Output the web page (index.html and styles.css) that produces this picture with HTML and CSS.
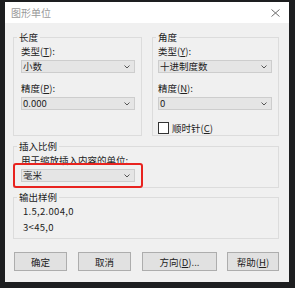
FILE: index.html
```html
<!DOCTYPE html>
<html lang="zh-CN">
<head>
    <meta charset="UTF-8">
    <title>图形单位</title>
    <link rel="stylesheet" href="styles.css">
</head>
<body>

<div class="dialog">
    <!-- 标题栏 -->
    <div class="titlebar">
        <span class="title">图形单位</span>
        <svg class="close" width="9" height="8" viewBox="0 0 9 8">
            <path d="M0.5 0.5 L8.5 7.5 M8.5 0.5 L0.5 7.5" stroke="#6e6e6e" stroke-width="1" fill="none"/>
        </svg>
    </div>

    <div class="content">
        <div class="top-groups">
            <!-- 长度 -->
            <fieldset class="group group-length">
                <legend>长度</legend>
                <div class="group-body">
                    <div class="label">类型(<u>T</u>):</div>
                    <div class="combo"><span>小数</span><svg class="arrow" width="6" height="4" viewBox="0 0 6 4"><path d="M0.5 0.5 L3 3 L5.5 0.5" stroke="#555" fill="none"/></svg></div>
                    <div class="label label-gap">精度(<u>P</u>):</div>
                    <div class="combo"><span>0.000</span><svg class="arrow" width="6" height="4" viewBox="0 0 6 4"><path d="M0.5 0.5 L3 3 L5.5 0.5" stroke="#555" fill="none"/></svg></div>
                </div>
            </fieldset>

            <!-- 角度 -->
            <fieldset class="group group-angle">
                <legend>角度</legend>
                <div class="group-body">
                    <div class="label">类型(<u>Y</u>):</div>
                    <div class="combo"><span>十进制度数</span><svg class="arrow" width="6" height="4" viewBox="0 0 6 4"><path d="M0.5 0.5 L3 3 L5.5 0.5" stroke="#555" fill="none"/></svg></div>
                    <div class="label label-gap">精度(<u>N</u>):</div>
                    <div class="combo"><span>0</span><svg class="arrow" width="6" height="4" viewBox="0 0 6 4"><path d="M0.5 0.5 L3 3 L5.5 0.5" stroke="#555" fill="none"/></svg></div>
                    <div class="check-row">
                        <span class="checkbox"></span>
                        <span>顺时针(<u>C</u>)</span>
                    </div>
                </div>
            </fieldset>
        </div>

        <!-- 插入比例 -->
        <fieldset class="group group-insert">
            <legend>插入比例</legend>
            <div class="group-body">
                <div class="label hint">用于缩放插入内容的单位:</div>
                <div class="combo combo-marked"><span>毫米</span><svg class="arrow" width="6" height="4" viewBox="0 0 6 4"><path d="M0.5 0.5 L3 3 L5.5 0.5" stroke="#555" fill="none"/></svg></div>
            </div>
        </fieldset>

        <!-- 输出样例 -->
        <fieldset class="group group-output">
            <legend>输出样例</legend>
            <div class="group-body">
                <div class="sample">1.5,2.004,0</div>
                <div class="sample sample-gap">3&lt;45,0</div>
            </div>
        </fieldset>

        <div class="buttons">
            <button class="btn btn-ok">确定</button>
            <button class="btn btn-cancel">取消</button>
            <button class="btn btn-dir">方向(<u>D</u>)...</button>
            <button class="btn btn-help">帮助(<u>H</u>)</button>
        </div>
    </div>
</div>

</body>
</html>
```

FILE: styles.css
```css
body {
    margin: 0;
    padding: 0;
    width: 295px;
    height: 288px;
    overflow: hidden;
    background: #1d1e20;
    font-family: "Noto Sans CJK SC", sans-serif;
    font-size: 9.5px;
    color: #222;
}
.dialog {
    margin: 2px 0 0 5px;
    width: 284px;
    height: 280px;
    background: #f0f0f0;
    display: flex;
    flex-direction: column;
}
.titlebar {
    height: 21px;
    background: #fff;
    display: flex;
    align-items: center;
    justify-content: space-between;
    padding: 0 9px 0 6px;
}
.title {
    font-size: 10px;
    color: #9a9a9a;
    line-height: 12px;
}
.content {
    padding: 8px 10px 0 8px;
}
.top-groups {
    display: flex;
    gap: 10px;
}
.group {
    margin: 0;
    padding: 0;
    border: 1px solid #dcdcdc;
    min-width: 0;
}
.group legend {
    margin-left: 3px;
    padding: 0 2px;
    line-height: 12px;
}
.group-length {
    flex: 0 0 127px;
}
.group-angle {
    flex: 1;
}
.group-length .group-body {
    padding: 2px 0 0 7px;
}
.group-angle .group-body {
    padding: 2px 0 1px 5px;
}
.label {
    line-height: 12px;
}
.label-gap {
    margin-top: 9px;
}
.combo {
    margin-top: 3px;
    width: 114px;
    height: 13px;
    box-sizing: border-box;
    background: #e5e5e5;
    border: 1px solid #cdcdcd;
    display: flex;
    align-items: center;
    justify-content: space-between;
    padding: 0 4px 0 1px;
    line-height: 11px;
}
.arrow {
    display: block;
}
.check-row {
    margin-top: 12px;
    height: 12px;
    display: flex;
    align-items: center;
    gap: 3px;
    line-height: 12px;
}
.checkbox {
    width: 9px;
    height: 10px;
    background: #fff;
    border: 1px solid #333;
}
.group-insert {
    margin-top: 4px;
}
.group-insert .group-body {
    padding: 3px 0 5px 7px;
}
.hint {
    line-height: 11px;
}
.combo-marked {
    position: relative;
    margin-top: 3px;
}
.combo-marked::after {
    content: "";
    position: absolute;
    top: -7px;
    left: -9px;
    right: -9px;
    bottom: -7px;
    border: 2px solid #e8231f;
    border-radius: 3px;
}
.group-output {
    margin-top: 3px;
}
.group-output .group-body {
    padding: 2px 0 5px 9px;
}
.sample {
    line-height: 12px;
    letter-spacing: 0.3px;
}
.sample-gap {
    margin-top: 4px;
}
.buttons {
    margin-top: 13px;
    margin-left: 1px;
    display: flex;
    gap: 11px;
}
.btn {
    height: 19px;
    padding: 0;
    margin: 0;
    background: #e1e1e1;
    border: 1px solid #adadad;
    font-family: "Noto Sans CJK SC", sans-serif;
    font-size: 9.5px;
    color: #222;
    line-height: 12px;
}
.btn-ok,
.btn-cancel {
    width: 53px;
}
.btn-dir {
    width: 75px;
}
.btn-help {
    width: 52px;
    margin-left: -1px;
}
```
